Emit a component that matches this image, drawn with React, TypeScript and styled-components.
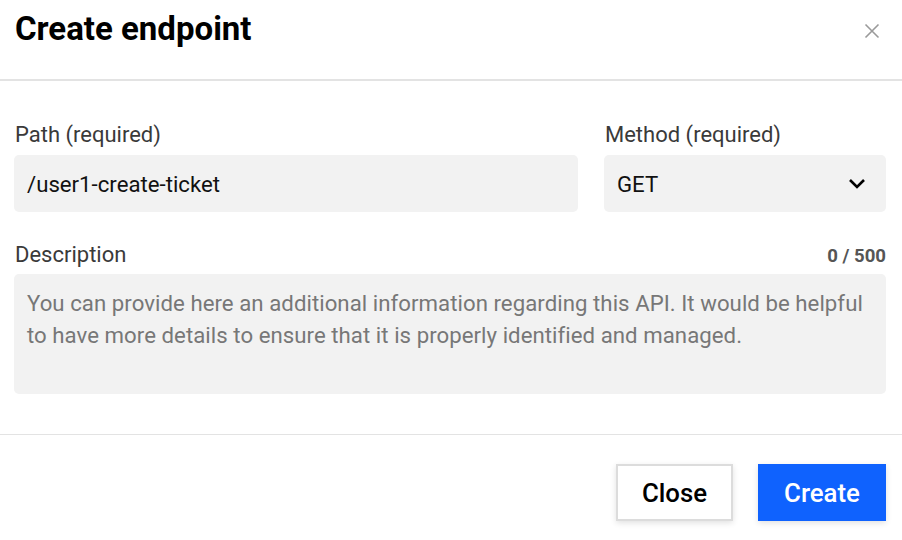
import React from "react";
import styled, { createGlobalStyle } from "styled-components";

const Global = createGlobalStyle`
  html, body { margin: 0; padding: 0; background: #ffffff; }
  body { font-family: Roboto, "Liberation Sans", Arial, sans-serif; }
  * { box-sizing: border-box; }
`;

const Modal = styled.div`
  width: 902px;
  height: 540px;
  background: #ffffff;
  display: flex;
  flex-direction: column;
  overflow: hidden;
`;

const Header = styled.header`
  height: 81px;
  border-bottom: 2px solid #e3e3e3;
  display: flex;
  align-items: flex-start;
  justify-content: space-between;
  padding: 9px 22px 0 15px;
`;

const Title = styled.h1`
  margin: 0;
  font-size: 33px;
  line-height: 40px;
  font-weight: 700;
  color: #000000;
`;

const CloseIcon = styled.button`
  margin-top: 14px;
  width: 16px;
  height: 16px;
  padding: 0;
  border: 0;
  background: transparent;
  display: flex;
  cursor: pointer;
`;

const Body = styled.div`
  padding: 42px 16px 0 14px;
  display: flex;
  flex-direction: column;
`;

const Row = styled.div`
  display: grid;
  grid-template-columns: 564px 1fr;
  column-gap: 26px;
`;

const Field = styled.div<{ $gap?: number }>`
  display: flex;
  flex-direction: column;
  gap: ${(p) => p.$gap ?? 8}px;
`;

const LabelRow = styled.div`
  display: flex;
  align-items: baseline;
  justify-content: space-between;
  padding-left: 1px;
`;

const Label = styled.label`
  font-size: 22px;
  line-height: 24px;
  color: #3a3a3a;
`;

const Counter = styled.span`
  font-size: 18.6px;
  font-weight: 700;
  color: #555555;
`;

const Input = styled.div`
  height: 57px;
  background: #f2f2f2;
  border-radius: 5px;
  display: flex;
  align-items: center;
  justify-content: space-between;
  padding: 0 20px 0 13px;
  font-size: 22.2px;
  color: #111111;
`;

const TextArea = styled.div`
  height: 120px;
  background: #f2f2f2;
  border-radius: 5px;
  padding: 13px 13px;
  font-size: 22.2px;
  letter-spacing: 0.05px;
  line-height: 32px;
  color: #777777;
`;

const Description = styled.div`
  margin-top: 31px;
`;

const Footer = styled.footer`
  margin-top: 40px;
  border-top: 1px solid #e3e3e3;
  padding: 29px 16px 0 0;
  display: flex;
  justify-content: flex-end;
  gap: 25px;
`;

const Button = styled.button<{ $primary?: boolean }>`
  height: 57px;
  width: ${(p) => (p.$primary ? 128 : 117)}px;
  padding: 0;
  font-family: inherit;
  font-size: 25.8px;
  font-weight: 500;
  border: ${(p) => (p.$primary ? "0" : "2px solid #dcdcdc")};
  background: ${(p) => (p.$primary ? "#0f62fe" : "#ffffff")};
  color: ${(p) => (p.$primary ? "#ffffff" : "#000000")};
  box-shadow: 0 2px 6px rgba(0, 0, 0, 0.12);
  cursor: pointer;
`;

export default function App() {
  return (
    <>
      <Global />
      <Modal>
        <Header>
          <Title>Create endpoint</Title>
          <CloseIcon aria-label="Close">
            <svg width="16" height="16" viewBox="0 0 16 16">
              <path d="M1.5 1.5 L14.5 14.5 M14.5 1.5 L1.5 14.5" stroke="#9a9a9a" strokeWidth="1.6" fill="none" />
            </svg>
          </CloseIcon>
        </Header>
        <Body>
          <Row>
            <Field>
              <LabelRow>
                <Label>Path (required)</Label>
              </LabelRow>
              <Input>/user1-create-ticket</Input>
            </Field>
            <Field>
              <LabelRow>
                <Label>Method (required)</Label>
              </LabelRow>
              <Input>
                GET
                <svg width="18" height="11" viewBox="0 0 18 11">
                  <path d="M2 2 L9 9 L16 2" stroke="#000" strokeWidth="2.6" fill="none" />
                </svg>
              </Input>
            </Field>
          </Row>
          <Description>
            <Field $gap={7}>
              <LabelRow>
                <Label>Description</Label>
                <Counter>0 / 500</Counter>
              </LabelRow>
              <TextArea>
                You can provide here an additional information regarding this API. It would be helpful to have more
                details to ensure that it is properly identified and managed.
              </TextArea>
            </Field>
          </Description>
        </Body>
        <Footer>
          <Button>Close</Button>
          <Button $primary>Create</Button>
        </Footer>
      </Modal>
    </>
  );
}
